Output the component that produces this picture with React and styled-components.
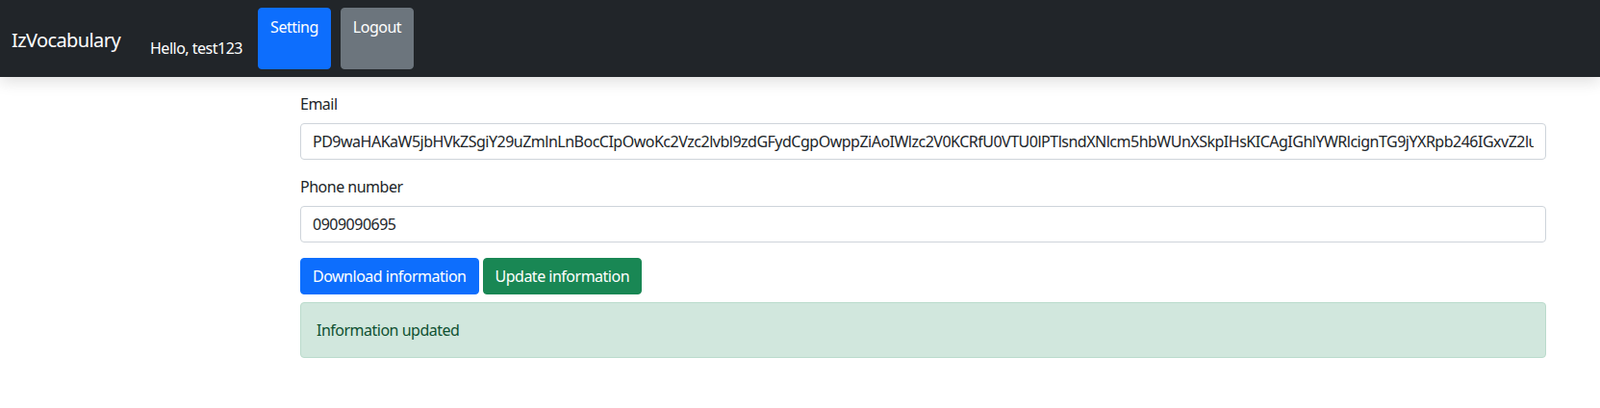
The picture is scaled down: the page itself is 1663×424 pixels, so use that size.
import styled, { createGlobalStyle } from "styled-components";

const EMAIL_VALUE =
  "PD9waHAKaW5jbHVkZSgiY29uZmlnLnBocCIpOwoKc2Vzc2lvbl9zdGFydCgpOwppZiAoIWlzc2V0KCRfU0VTU0lPTlsndXNlcm5hbWUnXSkpIHsKICAgIGhlYWRlcignTG9jYXRpb246IGxvZ2luLnBocCcpOwogICAgZXhpdDsKfQo=";

const App = () => {
  return (
    <Page>
      <GlobalStyle />
      <Navbar>
        <Brand>IzVocabulary</Brand>
        <Greeting>Hello, test123</Greeting>
        <NavButton variant="primary">Setting</NavButton>
        <NavButton variant="secondary">Logout</NavButton>
      </Navbar>
      <Main>
        <Content>
          <Field>
            <Label>Email</Label>
            <Input type="text" defaultValue={EMAIL_VALUE} readOnly />
          </Field>
          <Field>
            <Label>Phone number</Label>
            <Input type="text" defaultValue="0909090695" />
          </Field>
          <Actions>
            <Button variant="primary">Download information</Button>
            <Button variant="success">Update information</Button>
          </Actions>
          <Alert>Information updated</Alert>
        </Content>
      </Main>
    </Page>
  );
};

export default App;

const GlobalStyle = createGlobalStyle`
  * { box-sizing: border-box; }
  body {
    margin: 0;
    background: #fff;
    color: #212529;
    font-family: "Noto Sans", "Open Sans", sans-serif;
    font-size: 16px;
    line-height: 1.5;
    letter-spacing: -0.5px;
  }
  button, input {
    letter-spacing: inherit;
  }
`;

const Page = styled.div`
  min-height: 424px;
`;

const Navbar = styled.nav`
  height: 80px;
  background-color: #212529;
  display: flex;
  align-items: stretch;
  padding: 8px 12px;
  box-shadow: 0 4px 16px rgba(0, 0, 0, 0.14);
  position: relative;
`;

const Brand = styled.a`
  color: #fff;
  font-size: 20px;
  line-height: 30px;
  letter-spacing: -0.6px;
  align-self: center;
  margin-top: 4px;
  margin-right: 31px;
`;

const Greeting = styled.span`
  color: #fff;
  font-size: 16px;
  line-height: 24px;
  letter-spacing: -0.5px;
  align-self: flex-end;
  margin-bottom: 10px;
  margin-right: 16px;
`;

const colors = {
  primary: "#0d6efd",
  secondary: "#6c757d",
  success: "#198754",
};

const NavButton = styled.button`
  font-family: inherit;
  font-size: 16px;
  line-height: 24px;
  color: #fff;
  background-color: ${(p) => colors[p.variant]};
  border: 1px solid ${(p) => colors[p.variant]};
  border-radius: 4px;
  padding: 7px 12px 0;
  margin-right: 10px;
  display: flex;
  align-items: flex-start;
  justify-content: center;
  width: 76px;
`;

const Main = styled.main`
  padding: 16px 56px 0 312px;
`;

const Content = styled.div`
  display: flex;
  flex-direction: column;
`;

const Field = styled.div`
  margin-bottom: 16px;
`;

const Label = styled.label`
  display: block;
  margin-bottom: 8px;
  font-size: 16px;
  line-height: 24px;
`;

const Input = styled.input`
  display: block;
  width: 100%;
  height: 38px;
  padding: 6px 12px;
  font-family: inherit;
  font-size: 16px;
  line-height: 24px;
  color: #212529;
  background-color: #fff;
  border: 1px solid #ced4da;
  border-radius: 4px;
  outline: none;
`;

const Actions = styled.div`
  display: flex;
  gap: 4px;
  margin-bottom: 8px;
`;

const Button = styled.button`
  height: 38px;
  padding: 6px 12px;
  font-family: inherit;
  font-size: 16px;
  line-height: 24px;
  color: #fff;
  background-color: ${(p) => colors[p.variant]};
  border: 1px solid ${(p) => colors[p.variant]};
  border-radius: 4px;
  cursor: pointer;
`;

const Alert = styled.div`
  padding: 16px;
  color: #0f5132;
  background-color: #d1e7dd;
  border: 1px solid #badbcc;
  border-radius: 4px;
  font-size: 16px;
  line-height: 24px;
`;
